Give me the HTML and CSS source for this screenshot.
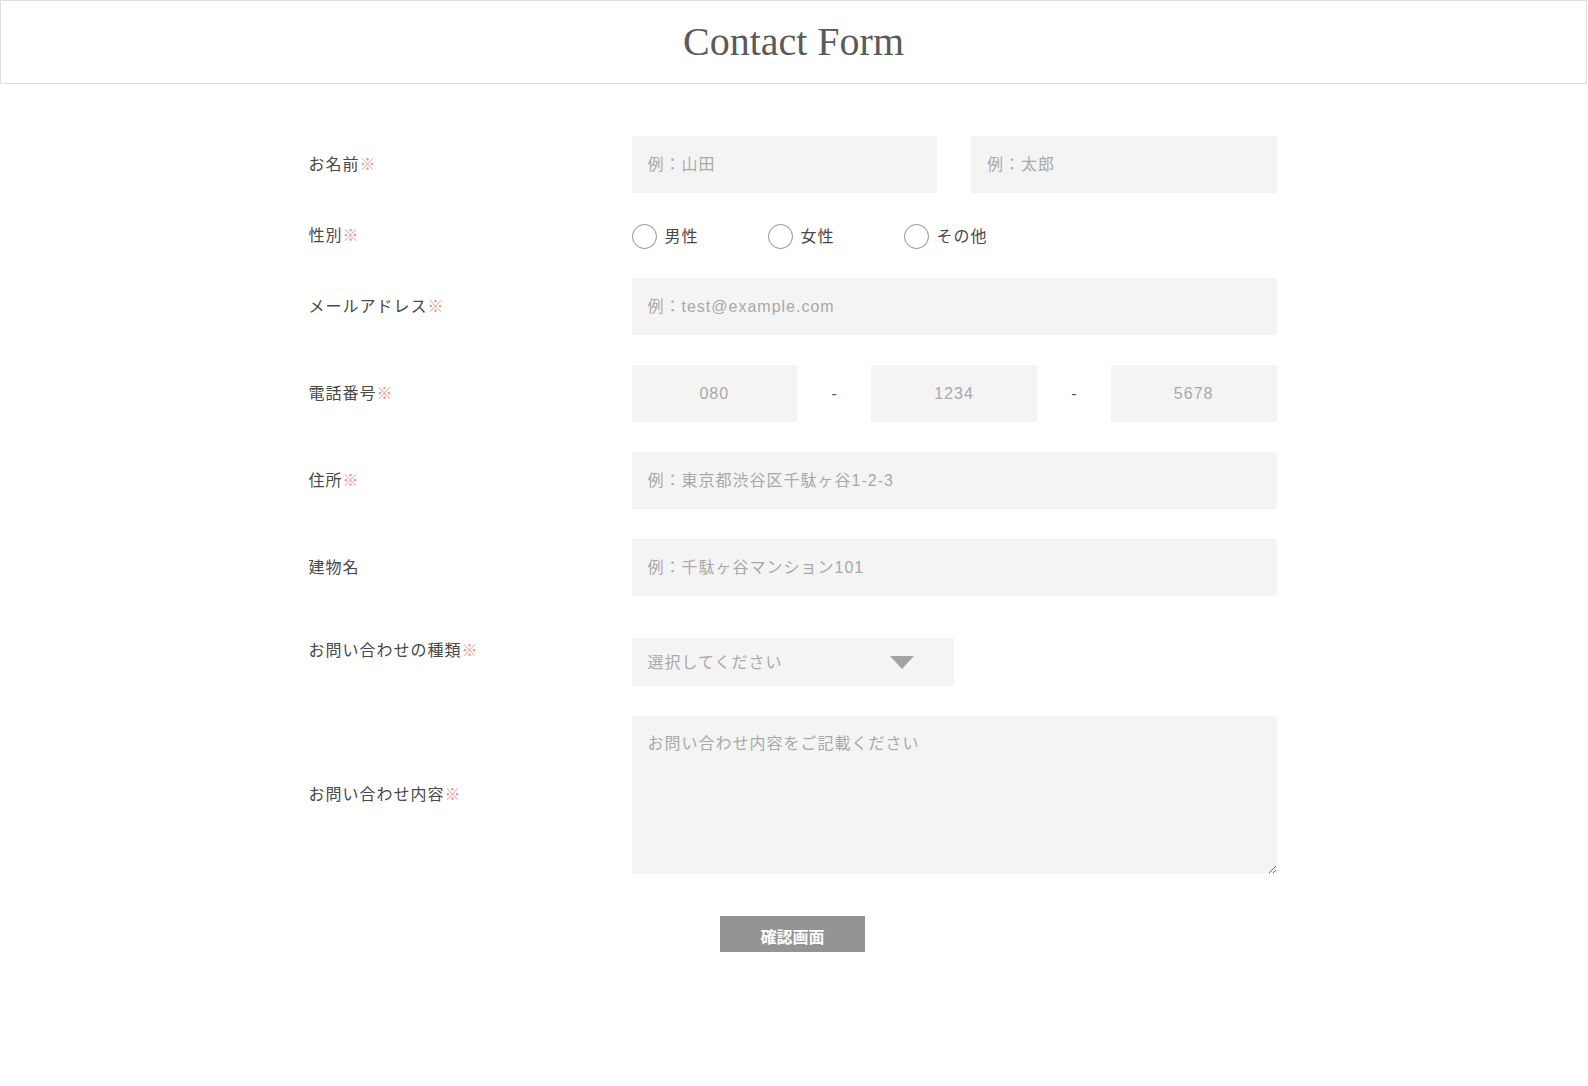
FILE: index.html
```html
<!DOCTYPE html>
<html lang="ja">
<head>
<meta charset="utf-8">
<title>Contact Form</title>
<link rel="stylesheet" href="styles.css">
</head>
<body>
<header class="site-header">
  <h1 class="title">Contact Form</h1>
</header>
<main>
  <form class="contact-form">
    <div class="row">
      <label class="label">お名前<span class="req">※</span></label>
      <div class="name-fields">
        <input class="field" type="text" placeholder="例：山田">
        <input class="field" type="text" placeholder="例：太郎">
      </div>
    </div>
    <div class="row row-radio">
      <label class="label">性別<span class="req">※</span></label>
      <div class="radio-group">
        <label class="radio-item"><input type="radio" name="gender" class="radio"><span>男性</span></label>
        <label class="radio-item"><input type="radio" name="gender" class="radio"><span>女性</span></label>
        <label class="radio-item"><input type="radio" name="gender" class="radio"><span>その他</span></label>
      </div>
    </div>
    <div class="row">
      <label class="label">メールアドレス<span class="req">※</span></label>
      <input class="field" type="email" placeholder="例：test@example.com">
    </div>
    <div class="row">
      <label class="label">電話番号<span class="req">※</span></label>
      <div class="tel-fields">
        <input class="field center" type="text" placeholder="080">
        <span class="dash">-</span>
        <input class="field center" type="text" placeholder="1234">
        <span class="dash">-</span>
        <input class="field center" type="text" placeholder="5678">
      </div>
    </div>
    <div class="row">
      <label class="label">住所<span class="req">※</span></label>
      <input class="field" type="text" placeholder="例：東京都渋谷区千駄ヶ谷1-2-3">
    </div>
    <div class="row">
      <label class="label">建物名</label>
      <input class="field" type="text" placeholder="例：千駄ヶ谷マンション101">
    </div>
    <div class="row row-select">
      <label class="label">お問い合わせの種類<span class="req">※</span></label>
      <div class="select-wrap">
        <select class="select">
          <option>選択してください</option>
        </select>
      </div>
    </div>
    <div class="row">
      <label class="label">お問い合わせ内容<span class="req">※</span></label>
      <textarea class="textarea" placeholder="お問い合わせ内容をご記載ください"></textarea>
    </div>
    <div class="actions">
      <button type="button" class="submit">確認画面</button>
    </div>
  </form>
</main>
</body>
</html>
```

FILE: styles.css
```css
* {
  box-sizing: border-box;
}

body {
  margin: 0;
  background: #fff;
  font-family: "Liberation Sans", "Noto Sans CJK JP", sans-serif;
  color: #444;
}

.site-header {
  height: 84px;
  margin-right: 1px;
  border: 1px solid #dedede;
  display: flex;
  align-items: center;
  justify-content: center;
}

.title {
  margin: 0;
  font-family: "Liberation Serif", serif;
  font-weight: normal;
  font-size: 40px;
  line-height: 1;
  color: #5a5a5a;
  letter-spacing: 0;
}

.contact-form {
  width: 971px;
  margin: 52px auto 0;
  display: flex;
  flex-direction: column;
  gap: 30px;
}

.row {
  display: grid;
  grid-template-columns: 323px 645px;
  align-items: center;
}

.label {
  font-size: 16px;
  letter-spacing: 1px;
  line-height: 26px;
  color: #484848;
}

.req {
  color: #f29494;
}

.field {
  display: block;
  width: 100%;
  height: 57px;
  border: none;
  outline: none;
  background: #f4f4f4;
  padding: 0 16px;
  font-family: inherit;
  font-size: 16px;
  letter-spacing: 1px;
  color: #444;
}

.field::placeholder,
.textarea::placeholder {
  color: #a9a9a9;
  opacity: 1;
}

.field.center {
  text-align: center;
}

.name-fields {
  display: grid;
  grid-template-columns: 1fr 1fr;
  gap: 34px;
}

.row-radio {
  height: 25px;
}

.radio-group {
  display: flex;
  align-items: center;
  gap: 69px;
}

.radio-item {
  display: flex;
  align-items: center;
  gap: 8px;
  font-size: 16px;
  letter-spacing: 1px;
  line-height: 25px;
  color: #484848;
}

.radio {
  appearance: none;
  -webkit-appearance: none;
  margin: 0;
  width: 25px;
  height: 25px;
  border: 1px solid #8f8f8f;
  border-radius: 50%;
  background: #fff;
}

.tel-fields {
  display: grid;
  grid-template-columns: 1fr 74px 1fr 74px 1fr;
  align-items: center;
}

.dash {
  text-align: center;
  font-size: 16px;
  color: #555;
}

.row-select {
  align-items: start;
  margin-top: 12px;
}

.select-wrap {
  position: relative;
  width: 322px;
}

.select-wrap::after {
  content: "";
  position: absolute;
  left: 258px;
  top: 18px;
  width: 0;
  height: 0;
  border-left: 12.5px solid transparent;
  border-right: 12.5px solid transparent;
  border-top: 13px solid #a3a3a3;
  pointer-events: none;
}

.select {
  appearance: none;
  -webkit-appearance: none;
  display: block;
  width: 100%;
  height: 48px;
  border: none;
  outline: none;
  border-radius: 0;
  background: #f4f4f4;
  padding: 0 16px;
  font-family: inherit;
  font-size: 16px;
  letter-spacing: 1px;
  color: #a9a9a9;
}

.textarea {
  display: block;
  width: 100%;
  height: 158px;
  border: none;
  outline: none;
  background: #f4f4f4;
  padding: 16px 16px;
  font-family: inherit;
  font-size: 16px;
  letter-spacing: 1px;
  line-height: 24px;
  color: #444;
}

.actions {
  display: flex;
  justify-content: center;
  margin-top: 12px;
  padding-right: 3px;
}

.submit {
  width: 145px;
  height: 36px;
  border: none;
  background: #949494;
  color: #fff;
  font-family: "Liberation Sans", "Noto Sans CJK JP", sans-serif;
  font-size: 16px;
  font-weight: bold;
  padding: 4px 0 0;
}
```
